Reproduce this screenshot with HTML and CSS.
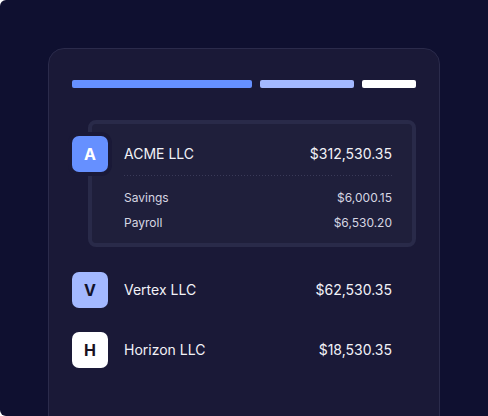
FILE: index.html
```html
<!DOCTYPE html>
<html>
<head>
<meta charset="utf-8">
<link rel="stylesheet" href="styles.css">
</head>
<body>
<div class="frame">
  <div class="card">
    <div class="bars">
      <div class="bar bar-blue"></div>
      <div class="bar bar-light"></div>
      <div class="bar bar-white"></div>
    </div>
    <div class="list">
      <div class="selected">
        <div class="row">
          <div class="avatar av-blue ring">A</div>
          <div class="name">ACME LLC</div>
          <div class="amount">$312,530.35</div>
        </div>
        <div class="divider"></div>
        <div class="subs">
          <div class="sub"><span>Savings</span><span>$6,000.15</span></div>
          <div class="sub"><span>Payroll</span><span>$6,530.20</span></div>
        </div>
      </div>
      <div class="row plain">
        <div class="avatar av-light">V</div>
        <div class="name">Vertex LLC</div>
        <div class="amount">$62,530.35</div>
      </div>
      <div class="row plain">
        <div class="avatar av-white">H</div>
        <div class="name">Horizon LLC</div>
        <div class="amount">$18,530.35</div>
      </div>
    </div>
  </div>
</div>
</body>
</html>
```

FILE: styles.css
```css
* { box-sizing: border-box; }
html, body { margin: 0; padding: 0; background: #ffffff; }
body { font-family: Inter, "Noto Sans", sans-serif; }
.frame {
  width: 488px;
  height: 416px;
  background: #0f1030;
  border-radius: 6px 0 0 6px;
  overflow: hidden;
  padding: 48px 48px 0 48px;
}
.card {
  width: 392px;
  height: 420px;
  background: #1a1937;
  border: 1px solid #2b2b4b;
  border-radius: 16px;
  padding: 31px 23px 0 23px;
}
.bars { display: flex; gap: 8px; height: 8px; }
.bar { height: 8px; border-radius: 2px; }
.bar-blue { width: 180px; background: #6690ff; }
.bar-light { width: 94px; background: #a3b8ff; }
.bar-white { width: 54px; background: #ffffff; }
.list { margin-top: 32px; display: flex; flex-direction: column; gap: 24px; }
.selected {
  margin-left: 16px;
  background: #1f1f3b;
  border: 4px solid #292a49;
  border-radius: 8px;
  padding: 12px 20px 12px 0;
  margin-bottom: 1px;
}
.row { display: flex; align-items: center; height: 36px; }
.selected .row { margin-left: -20px; }
.plain { padding-right: 24px; }
.avatar {
  width: 36px;
  height: 36px;
  border-radius: 7px;
  display: flex;
  align-items: center;
  justify-content: center;
  font-weight: 700;
  font-size: 16px;
  flex: none;
}
.ring { box-shadow: 0 0 0 4px #1a1937; }
.av-blue { background: #6690ff; color: #ffffff; }
.av-light { background: #a3b8ff; color: #12122a; }
.av-white { background: #ffffff; color: #1a1020; }
.name { margin-left: 16px; flex: 1; color: #f2f2f7; font-size: 14px; line-height: 16px; padding-bottom: 1px; }
.amount { color: #f2f2f7; font-size: 14px; line-height: 16px; padding-bottom: 1px; }
.divider {
  margin: 3px 0 0 32px;
  height: 1px;
  background: repeating-linear-gradient(90deg, #3a3a58 0 1px, transparent 1px 3px);
}
.subs { margin-left: 32px; padding-top: 13px; display: flex; flex-direction: column; gap: 8px; }
.sub {
  display: flex;
  justify-content: space-between;
  font-size: 12px;
  line-height: 17px;
  color: #d6d6e2;
}
```
